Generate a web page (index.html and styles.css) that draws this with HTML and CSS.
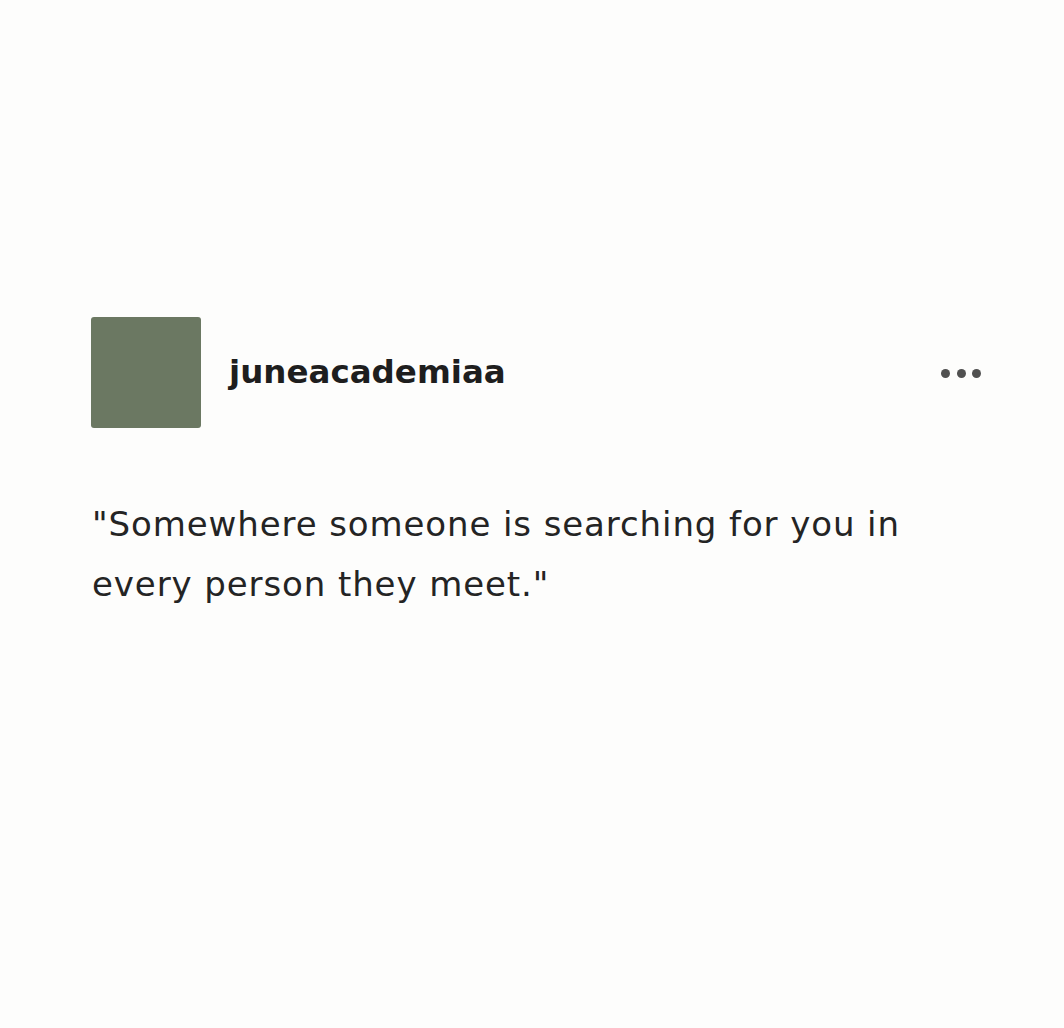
FILE: index.html
```html
<!DOCTYPE html>
<html>
<head>
<meta charset="utf-8">
<link rel="stylesheet" href="styles.css">
</head>
<body>
<main class="post">
  <header class="post-header">
    <div class="avatar"></div>
    <div class="username">juneacademiaa</div>
    <div class="more" aria-label="more">
      <span class="dot"></span><span class="dot"></span><span class="dot"></span>
    </div>
  </header>
  <p class="quote">"Somewhere someone is searching for you in<br>every person they meet."</p>
</main>
</body>
</html>
```
FILE: styles.css
```css
html, body {
  margin: 0;
  padding: 0;
  background: #fdfdfc;
}
body {
  width: 1064px;
  height: 1028px;
  font-family: "DejaVu Sans", "Liberation Sans", sans-serif;
  color: #222;
}
.post {
  padding: 317px 83px 0 91px;
}
.post-header {
  display: flex;
  align-items: center;
}
.avatar {
  width: 110px;
  height: 111px;
  border-radius: 3px;
  background: #6b7862;
  flex: none;
}
.username {
  margin-left: 28px;
  font-size: 32.5px;
  font-weight: bold;
  color: #1e1e1e;
  flex: 1;
  position: relative;
  top: -1px;
}
.more {
  display: flex;
  gap: 6.5px;
  margin-top: 2px;
}
.dot {
  width: 9px;
  height: 9px;
  border-radius: 50%;
  background: #505050;
}
.quote {
  margin: 66px 0 0;
  padding-left: 1px;
  font-size: 34px;
  letter-spacing: 0.9px;
  line-height: 60px;
  color: #242424;
}
```
